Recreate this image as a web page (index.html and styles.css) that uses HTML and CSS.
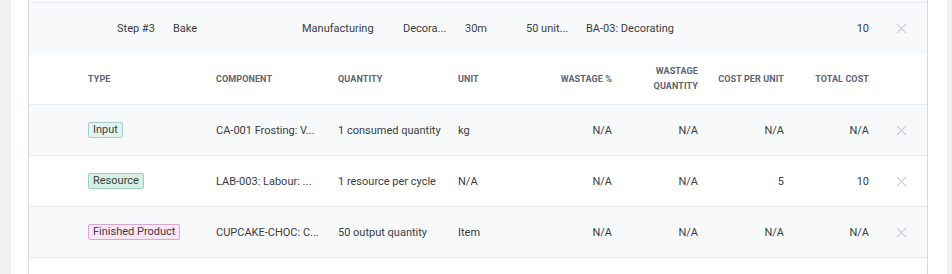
FILE: index.html
```html
<!DOCTYPE html>
<html>
<head>
<meta charset="utf-8">
<link rel="stylesheet" href="styles.css">
</head>
<body>
<div class="page">
  <div class="sheet">
    <div class="panel">
      <div class="top-strip"></div>
      <div class="step-row">
        <span></span>
        <span>Step #3</span>
        <span>Bake</span>
        <span>Manufacturing</span>
        <span>Decora...</span>
        <span>30m</span>
        <span>50 unit...</span>
        <span>BA-03: Decorating</span>
        <span class="num">10</span>
        <span></span>
        <span class="x"><svg width="12" height="12" viewBox="0 0 12 12"><path d="M1 1L11 11M11 1L1 11" stroke="#c4c8ce" stroke-width="1.1" fill="none"/></svg></span>
      </div>
      <div class="row head">
        <span></span>
        <span>TYPE</span>
        <span>COMPONENT</span>
        <span>QUANTITY</span>
        <span>UNIT</span>
        <span class="num">WASTAGE %</span>
        <span class="num">WASTAGE<br>QUANTITY</span>
        <span class="num">COST PER UNIT</span>
        <span class="num">TOTAL COST</span>
        <span></span>
      </div>
      <div class="row shade">
        <span></span>
        <span><span class="badge input">Input</span></span>
        <span>CA-001 Frosting: V...</span>
        <span>1 consumed quantity</span>
        <span>kg</span>
        <span class="num">N/A</span>
        <span class="num">N/A</span>
        <span class="num">N/A</span>
        <span class="num">N/A</span>
        <span class="x"><svg width="12" height="12" viewBox="0 0 12 12"><path d="M1 1L11 11M11 1L1 11" stroke="#c4c8ce" stroke-width="1.1" fill="none"/></svg></span>
      </div>
      <div class="row">
        <span></span>
        <span><span class="badge resource">Resource</span></span>
        <span>LAB-003: Labour: ...</span>
        <span>1 resource per cycle</span>
        <span>N/A</span>
        <span class="num">N/A</span>
        <span class="num">N/A</span>
        <span class="num">5</span>
        <span class="num">10</span>
        <span class="x"><svg width="12" height="12" viewBox="0 0 12 12"><path d="M1 1L11 11M11 1L1 11" stroke="#c4c8ce" stroke-width="1.1" fill="none"/></svg></span>
      </div>
      <div class="row shade">
        <span></span>
        <span><span class="badge finished">Finished Product</span></span>
        <span>CUPCAKE-CHOC: C...</span>
        <span>50 output quantity</span>
        <span>Item</span>
        <span class="num">N/A</span>
        <span class="num">N/A</span>
        <span class="num">N/A</span>
        <span class="num">N/A</span>
        <span class="x"><svg width="12" height="12" viewBox="0 0 12 12"><path d="M1 1L11 11M11 1L1 11" stroke="#c4c8ce" stroke-width="1.1" fill="none"/></svg></span>
      </div>
      <div class="tail"></div>
    </div>
  </div>
</div>
</body>
</html>
```
FILE: styles.css
```css
html, body {
  margin: 0;
  padding: 0;
  background: #f0f1f3;
  font-family: Roboto, "Liberation Sans", sans-serif;
  color: #3a3d42;
}
.page {
  height: 274px;
  overflow: hidden;
  padding: 0 5px 0 11px;
}
.sheet {
  background: #ffffff;
  padding: 0 19px 0 17px;
  height: 274px;
}
.panel {
  border-left: 1px solid #d5d8dd;
  border-right: 1px solid #d5d8dd;
  height: 274px;
  background: #ffffff;
}
.top-strip {
  height: 2px;
  background: #f8f9fb;
  border-bottom: 1px solid #e8eaee;
}
.step-row {
  display: grid;
  grid-template-columns: 88px 56px 129px 101px 62px 61px 60px 214px 69px 16px 33px;
  align-items: center;
  height: 51px;
  background: #f8f9fb;
  font-size: 11px;
}
.step-row > span { white-space: nowrap; }
.row {
  display: grid;
  grid-template-columns: 43px 128px 122px 120px 70px 116px 86px 86px 85px 33px;
  align-items: center;
  height: 50px;
  border-bottom: 1px solid #e8eaee;
  font-size: 11px;
}
.row > span {
  padding-left: 16px;
  white-space: nowrap;
}
.row > span:first-child { padding-left: 0; }
.row > span.num {
  padding-left: 0;
  padding-right: 16px;
  text-align: right;
}
.step-row > span.num { text-align: right; }
.x {
  display: flex;
  align-items: center;
  justify-content: center;
  padding: 0 !important;
}
.x svg { display: block; width: 11px; height: 11px; }
.row.head {
  background: #ffffff;
  font-size: 9px;
  font-weight: 700;
  color: #5d6472;
  line-height: 15px;
  letter-spacing: 0.1px;
}
.row.shade { background: #f8f9fb; }
.badge {
  display: inline-block;
  font-size: 11px;
  line-height: 14px;
  padding: 0 4px;
  border-radius: 2px;
  border: 1px solid;
  color: #3a3d42;
}
.badge.input { background: #e2f3f0; border-color: #a9cdc8; }
.badge.resource { background: #d4f0e2; border-color: #9dd0b4; }
.badge.finished { background: #fbe6f8; border-color: #d8a6cf; }
.tail { height: 20px; background: #ffffff; }
```
